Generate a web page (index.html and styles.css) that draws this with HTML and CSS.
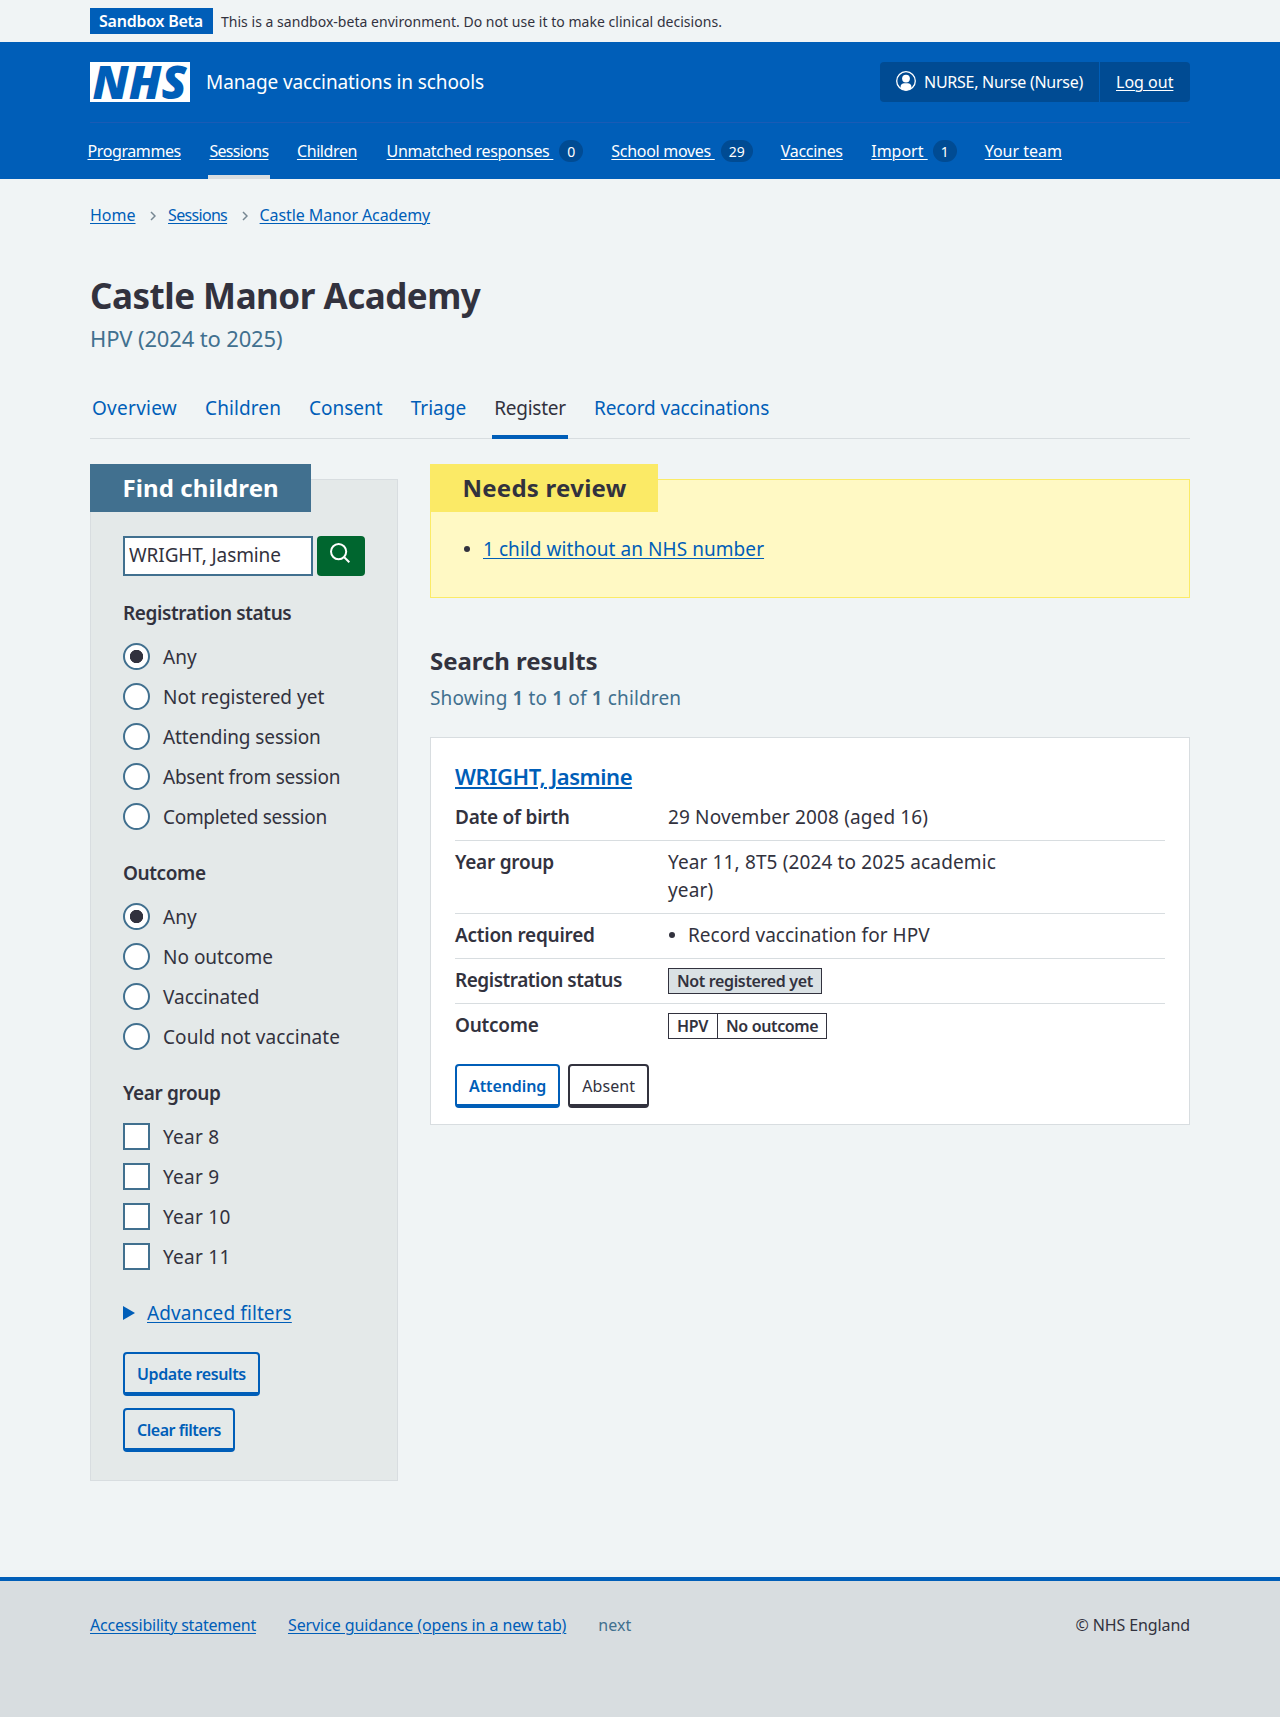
FILE: index.html
```html
<!DOCTYPE html>
<html lang="en">
<head>
<meta charset="utf-8">
<title>Castle Manor Academy – Manage vaccinations in schools</title>
<link rel="stylesheet" href="styles.css">
</head>
<body>
<div class="environment">
  <div class="container environment-row">
    <strong class="environment-tag">Sandbox Beta</strong>
    <span class="environment-text">This is a sandbox-beta environment. Do not use it to make clinical decisions.</span>
  </div>
</div>

<header class="header">
  <div class="container">
    <div class="header-top">
      <svg class="logo" viewBox="0 0 100 40" role="img" aria-label="NHS">
        <rect width="100" height="40" fill="#fff"/>
        <text class="logo-text" x="2.5" y="36.5" textLength="94" lengthAdjust="spacingAndGlyphs">NHS</text>
      </svg>
      <span class="service-name">Manage vaccinations in schools</span>
      <div class="account">
        <span class="account-item account-user">
          <svg class="user-icon" viewBox="0 0 20 20" aria-hidden="true">
            <circle cx="10" cy="10" r="9.3" fill="none" stroke="#fff" stroke-width="1.3"/>
            <circle cx="10" cy="7.6" r="3.9" fill="#fff"/>
            <path d="M4.6 17.2v-1.4c0-2.3 1.6-3.5 3.6-3.5h3.6c2 0 3.6 1.2 3.6 3.5v1.4C14 18.700 12 19.300 10 19.300s-4-.6-5.400-2.100z" fill="#fff"/>
          </svg>
          NURSE, Nurse (Nurse)
        </span>
        <span class="account-item account-logout"><a href="#">Log out</a></span>
      </div>
    </div>
    <nav class="nav">
      <a href="#" class="nav-item tight-4">Programmes</a>
      <a href="#" class="nav-item tight-7 nav-current">Sessions</a>
      <a href="#" class="nav-item tight-4 nav-children">Children</a>
      <a href="#" class="nav-item tight-3"><u>Unmatched responses&nbsp;</u><span class="count">0</span></a>
      <a href="#" class="nav-item tight-3"><u>School moves&nbsp;</u><span class="count">29</span></a>
      <a href="#" class="nav-item tight-3">Vaccines</a>
      <a href="#" class="nav-item nav-import"><u>Import&nbsp;</u><span class="count">1</span></a>
      <a href="#" class="nav-item">Your team</a>
    </nav>
  </div>
</header>

<main class="container main">
  <nav class="breadcrumb">
    <a href="#">Home</a>
    <svg class="chevron" viewBox="0 0 6 10" aria-hidden="true"><path d="M1 1l4 4-4 4"/></svg>
    <a href="#" class="tight-7">Sessions</a>
    <svg class="chevron" viewBox="0 0 6 10" aria-hidden="true"><path d="M1 1l4 4-4 4"/></svg>
    <a href="#" class="tight-1">Castle Manor Academy</a>
  </nav>

  <h1 class="title">Castle Manor Academy</h1>
  <p class="caption">HPV (2024 to 2025)</p>

  <nav class="tabs">
    <a href="#" class="tab wide-3">Overview</a>
    <a href="#" class="tab wide-1">Children</a>
    <a href="#" class="tab">Consent</a>
    <a href="#" class="tab">Triage</a>
    <a href="#" class="tab tab-current tight-2">Register</a>
    <a href="#" class="tab tight-1">Record vaccinations</a>
  </nav>

  <div class="columns">
    <form class="panel filters">
      <h2 class="panel-label">Find children</h2>
      <div class="search">
        <input class="search-input" type="text" value="WRIGHT, Jasmine" aria-label="Search">
        <button class="search-button" type="button" aria-label="Search">
          <svg viewBox="0 0 20 20" aria-hidden="true"><circle cx="8.600" cy="8.600" r="7.600"/><path d="M14 14l5.300 5.300"/></svg>
        </button>
      </div>

      <h3 class="legend">Registration status</h3>
      <label class="option"><input type="radio" class="radio" name="reg" checked>Any</label>
      <label class="option"><input type="radio" class="radio" name="reg">Not registered yet</label>
      <label class="option tight-1"><input type="radio" class="radio" name="reg">Attending session</label>
      <label class="option tight-2"><input type="radio" class="radio" name="reg">Absent from session</label>
      <label class="option tight-3"><input type="radio" class="radio" name="reg">Completed session</label>

      <h3 class="legend">Outcome</h3>
      <label class="option"><input type="radio" class="radio" name="out" checked>Any</label>
      <label class="option"><input type="radio" class="radio" name="out">No outcome</label>
      <label class="option"><input type="radio" class="radio" name="out">Vaccinated</label>
      <label class="option wide-1"><input type="radio" class="radio" name="out">Could not vaccinate</label>

      <h3 class="legend">Year group</h3>
      <label class="option wide-3"><input type="checkbox" class="checkbox">Year 8</label>
      <label class="option wide-3"><input type="checkbox" class="checkbox">Year 9</label>
      <label class="option wide-3"><input type="checkbox" class="checkbox">Year 10</label>
      <label class="option wide-3"><input type="checkbox" class="checkbox">Year 11</label>

      <div class="advanced">
        <svg class="triangle" viewBox="0 0 12 14" aria-hidden="true"><path d="M0 0l12 7-12 7z"/></svg>
        <a href="#" class="wide-1">Advanced filters</a>
      </div>
      <div class="filter-actions">
        <button type="button" class="button tight-4">Update results</button>
        <button type="button" class="button tight-5">Clear filters</button>
      </div>
    </form>

    <div class="results">
      <section class="panel review">
        <h2 class="panel-label">Needs review</h2>
        <ul class="bullets review-list">
          <li><a href="#">1 child without an NHS number</a></li>
        </ul>
      </section>

      <h2 class="results-title">Search results</h2>
      <p class="results-count">Showing <b>1</b> to <b>1</b> of <b>1</b> children</p>

      <article class="card">
        <h3 class="card-title"><a href="#">WRIGHT, Jasmine</a></h3>
        <dl class="summary">
          <div class="row"><dt>Date of birth</dt><dd>29 November 2008 (aged 16)</dd></div>
          <div class="row"><dt>Year group</dt><dd>Year 11, 8T5 (2024 to 2025 academic year)</dd></div>
          <div class="row"><dt>Action required</dt><dd><ul class="bullets"><li>Record vaccination for HPV</li></ul></dd></div>
          <div class="row"><dt class="tight-5">Registration status</dt><dd class="tags"><span class="tag tag-grey">Not registered yet</span></dd></div>
          <div class="row"><dt>Outcome</dt><dd class="tags"><span class="tag tag-programme">HPV</span><span class="tag">No outcome</span></dd></div>
        </dl>
        <div class="card-actions">
          <button type="button" class="button tight-1">Attending</button>
          <button type="button" class="button button-dark wide-1">Absent</button>
        </div>
      </article>
    </div>
  </div>
</main>

<footer class="footer">
  <div class="container footer-row">
    <a href="#" class="tight-2">Accessibility statement</a>
    <a href="#" class="tight-1">Service guidance (opens in a new tab)</a>
    <span class="footer-next">next</span>
    <span class="copyright tight-1">© NHS England</span>
  </div>
</footer>
</body>
</html>
```
FILE: styles.css
```css
* { box-sizing: border-box; }

body {
  margin: 0;
  min-height: 1717px;
  display: flex;
  flex-direction: column;
  background: #f0f4f5;
  color: #32323e;
  font: 400 19px/28px "Noto Sans", "Open Sans", sans-serif;
}

h1, h2, h3, p, ul, dl, dd { margin: 0; padding: 0; }
a { color: #005eb8; text-decoration-thickness: 1px; text-underline-offset: 2px; }
svg { display: block; }

.container { width: 1100px; margin: 0 auto; }

/* Tracking steps */
.wide-3 { letter-spacing: 0.27px; }
.wide-1 { letter-spacing: 0.1px; }
.tight-1 { letter-spacing: -0.1px; }
.tight-2 { letter-spacing: -0.23px; }
.tight-3 { letter-spacing: -0.3px; }
.tight-4 { letter-spacing: -0.4px; }
.tight-5 { letter-spacing: -0.48px; }
.tight-7 { letter-spacing: -0.68px; }

/* Environment banner */
.environment { height: 42px; padding-top: 8px; }
.environment-row { display: flex; align-items: baseline; gap: 8px; line-height: 24px; }
.environment-tag {
  height: 26px;
  padding: 1px 10px 1px 9px;
  background: #005eb8;
  color: #fff;
  font-size: 16px;
  font-weight: 600;
  letter-spacing: -0.24px;
}
.environment-text { font-size: 14px; letter-spacing: 0.03px; }

/* Header */
.header { height: 137px; background: #005eb8; color: #fff; font-size: 16px; line-height: 24px; }
.header a { color: #fff; }
.header-top {
  display: flex;
  align-items: center;
  height: 81px;
  border-bottom: 1px solid #1a5bb5;
}
.logo { width: 100px; height: 40px; overflow: visible; }
.logo-text { font: italic 800 46px "Open Sans", "Noto Sans", sans-serif; fill: #005eb8; }
.service-name { margin-left: 16px; font-size: 19px; letter-spacing: -0.1px; }
.account { display: flex; height: 40px; margin-left: auto; border-radius: 4px; background: #004b93; }
.account-item { display: flex; align-items: center; padding: 0 16px; }
.account-user { gap: 8px; width: 220px; border-right: 1px solid #005eb8; letter-spacing: -0.27px; white-space: nowrap; }
.account-logout { width: 90px; }
.user-icon { flex: none; width: 20px; height: 20px; margin-top: -2px; }

.nav { display: flex; gap: 25px; height: 56px; margin-left: -4px; }
.nav-item { padding: 16px 2px 0 1.5px; white-space: nowrap; text-decoration-thickness: 1px; }
.nav-children { padding-right: 3px; }
.nav-item:has(.count) { display: flex; text-decoration: none; gap: 6px; padding-right: 1.500px; }
.nav-item.nav-import { gap: 5px; }
.nav-item u { text-decoration-thickness: 1px; }
.nav-current { border-bottom: 4px solid #d8dde0; }
.count {
  height: 22px;
  min-width: 24px;
  margin-top: 1px;
  padding: 0 8px;
  border-radius: 11px;
  background: #004b93;
  font-size: 14px;
  line-height: 23px;
  letter-spacing: 0;
  text-align: center;
}

/* Page heading */
.breadcrumb { display: flex; align-items: center; padding-top: 24px; font-size: 16px; line-height: 24px; }
.chevron { width: 6px; height: 10px; margin: 1px 12px 0 14.500px; fill: none; stroke: #768692; stroke-width: 1.5; }
.title { margin-top: 48px; font-size: 35px; font-weight: 700; line-height: 42px; letter-spacing: -0.5px; }
.caption { margin-top: 5px; color: #41708f; font-size: 22px; line-height: 32px; letter-spacing: -0.15px; }

.tabs { display: flex; gap: 24px; margin-top: 32px; border-bottom: 1px solid #d8dde0; }
.tab { height: 53px; margin-bottom: -1px; padding: 8px 2px 0; text-decoration: none; }
.tab-current { color: #32323e; border-bottom: 4px solid #005eb8; }

/* Two columns */
.columns { display: flex; align-items: flex-start; gap: 32px; margin-top: 40px; }
.results { flex: 1; }

.panel { border: 1px solid #d8dde0; padding: 0 32px; }
.panel-label {
  margin: -16px 0 0 -33px;
  padding: 8px 0 8px 32.500px;
  font-size: 24px;
  font-weight: 700;
  line-height: 32px;
  letter-spacing: 0.1px;
  white-space: nowrap;
}

.filters { width: 308px; background: #e4e9e9; padding-bottom: 28px; }
.filters .panel-label { width: 221px; background: #41708f; color: #fff; }

.search { display: flex; gap: 4px; margin-top: 24px; }
.search-input {
  width: 190px;
  height: 40px;
  padding: 0 4px 2px;
  border: 2px solid #41708f;
  border-radius: 0;
  background: #fff;
  color: #32323e;
  font: inherit;
  letter-spacing: -0.1px;
}
.search-button {
  display: flex;
  align-items: flex-start;
  width: 48px;
  height: 40px;
  padding: 7px 13px;
  border: 0;
  border-radius: 4px;
  background: #00662f;
}
.search-button svg { width: 20px; height: 20px; fill: none; stroke: #fff; stroke-width: 2; }

.legend { margin: 23px 0 9px; font-size: 19px; font-weight: 600; letter-spacing: -0.4px; line-height: 28px; }
.option { display: flex; align-items: center; gap: 13px; height: 40px; padding-top: 2px; }
.radio, .checkbox {
  appearance: none;
  width: 27px;
  height: 27px;
  margin: 0 0 2px;
  border: 2px solid #41708f;
  background: #fff;
}
.radio { border-radius: 50%; }
.radio:checked { background: radial-gradient(circle, #32323e 6.300px, #fff 7px); }

.advanced { display: flex; align-items: center; gap: 12px; margin-top: 23px; }
.triangle { width: 12px; height: 14px; fill: #005eb8; }

.filter-actions { display: flex; flex-direction: column; align-items: flex-start; gap: 12px; margin-top: 25px; }
.button {
  height: 44px;
  padding: 2px 12px 0;
  border: 2px solid #005eb8;
  border-bottom-width: 4px;
  border-radius: 4px;
  background: transparent;
  color: #005eb8;
  font: 600 16px/24px "Noto Sans", "Open Sans", sans-serif;
}
.button-dark { border-color: #32323e; color: #32323e; font-weight: 400; }

/* Results */
.review { height: 119px; border-color: #fbeb67; background: #fff9c4; }
.review .panel-label { width: 228px; background: #fbea66; letter-spacing: 0.25px; }
.review-list { margin-top: 23px; }

.bullets { list-style: none; }
.bullets li { display: flex; align-items: center; gap: 13.500px; }
.bullets li::before { content: ""; width: 6px; height: 6px; margin-left: 0.500px; border-radius: 50%; background: #32323e; }
.review-list a { letter-spacing: 0.06px; }

.results-title { margin-top: 47px; font-size: 24px; font-weight: 700; line-height: 32px; letter-spacing: -0.05px; }
.results-count { margin-top: 7px; color: #41708f; letter-spacing: 0.13px; }
.results-count b { font-weight: 600; }

.card { margin-top: 25px; padding: 23px 24px 16px; border: 1px solid #d8dde0; background: #fff; }
.card-title { font-size: 22px; font-weight: 600; line-height: 30px; letter-spacing: -0.44px; }
.card-title a { text-decoration-thickness: 2px; }
.summary { margin-top: 5px; }
.row { display: flex; padding: 7px 0 9px; border-bottom: 1px solid #d8dde0; }
.row:last-child { border-bottom: 0; padding-bottom: 0; }
.row dt { width: 213px; font-weight: 600; letter-spacing: -0.25px; }
.row dt.tight-5 { letter-spacing: -0.48px; }
.row dd { width: 340px; letter-spacing: 0.13px; }
.row .bullets { letter-spacing: 0.03px; }
.row .tags { display: flex; height: 28px; padding-top: 2px; }
.tag {
  height: 26px;
  padding: 0 8px;
  border: 1px solid #32323e;
  font-size: 16px;
  font-weight: 600;
  line-height: 24px;
  letter-spacing: -0.36px;
}
.tag + .tag { margin-left: -1px; }
.tag-programme { width: 50px; }
.tag-grey { background: #dae1e4; }
.card-actions { display: flex; gap: 8px; margin-top: 25px; }

/* Footer */
.footer { flex: 1; margin-top: 96px; padding-top: 32px; border-top: 4px solid #005eb8; background: #d8dde0; font-size: 16px; line-height: 24px; }
.footer-row { display: flex; gap: 32px; }
.footer-next { color: #41708f; }
.copyright { margin-left: auto; }
```
